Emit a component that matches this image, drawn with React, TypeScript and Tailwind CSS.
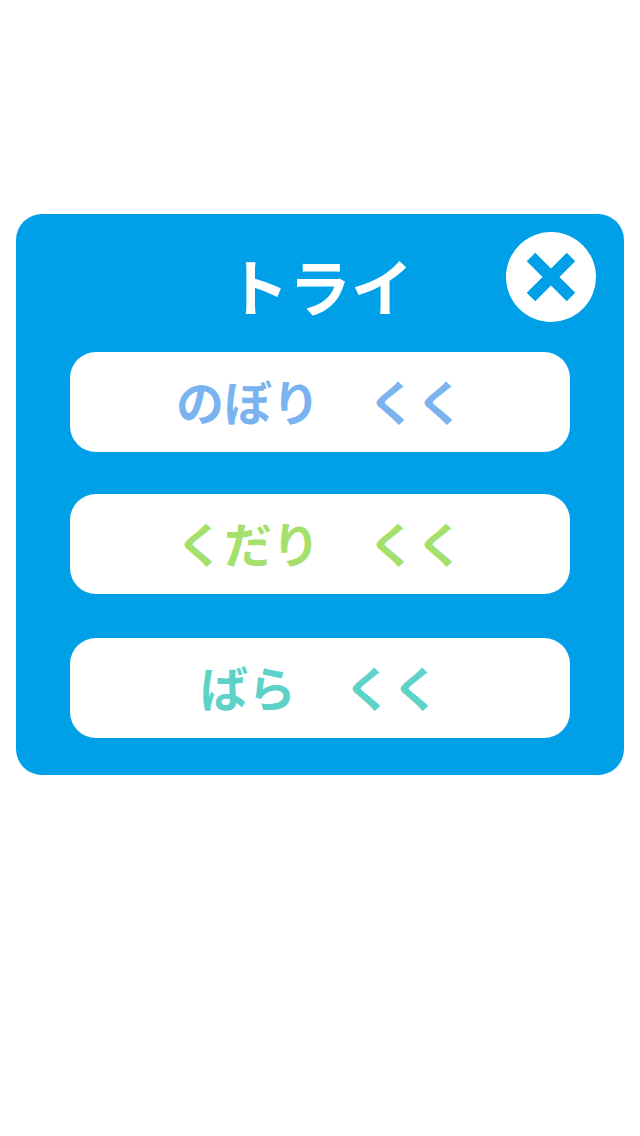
const FONT = "font-['Noto_Sans_CJK_JP','Noto_Sans',sans-serif]";

function ModeButton({ label, className }: { label: string; className: string }) {
  return (
    <button className={`flex h-[100px] w-[500px] items-center justify-center rounded-[26px] bg-white pb-[4px] text-[48px] leading-none font-bold ${className}`}>
      {label}
    </button>
  );
}

export default function App() {
  return (
    <div className={`min-h-[1136px] bg-white pt-[214px] ${FONT}`}>
      <div className="relative mx-4 flex h-[561px] flex-col items-center rounded-[26px] bg-[#00a0e9]">
        <h1 className="mt-[35px] text-[62px] leading-[73px] font-bold text-white">トライ</h1>

        {/* close */}
        <button className="absolute top-[18px] right-[28px] flex h-[90px] w-[90px] items-center justify-center rounded-full bg-white">
          <svg viewBox="0 0 54 54" className="h-[54px] w-[54px]">
            <path d="M7 7 L47 47 M47 7 L7 47" stroke="#00a0e9" strokeWidth="12" fill="none" />
          </svg>
        </button>

        <div className="mt-[30px] flex flex-col">
          <ModeButton label="のぼり　くく" className="text-[#7ab3f0]" />
          <ModeButton label="くだり　くく" className="mt-[42px] text-[#a6e06c]" />
          <ModeButton label="ばら　くく" className="mt-[44px] text-[#5fd2c8]" />
        </div>
      </div>
    </div>
  );
}
